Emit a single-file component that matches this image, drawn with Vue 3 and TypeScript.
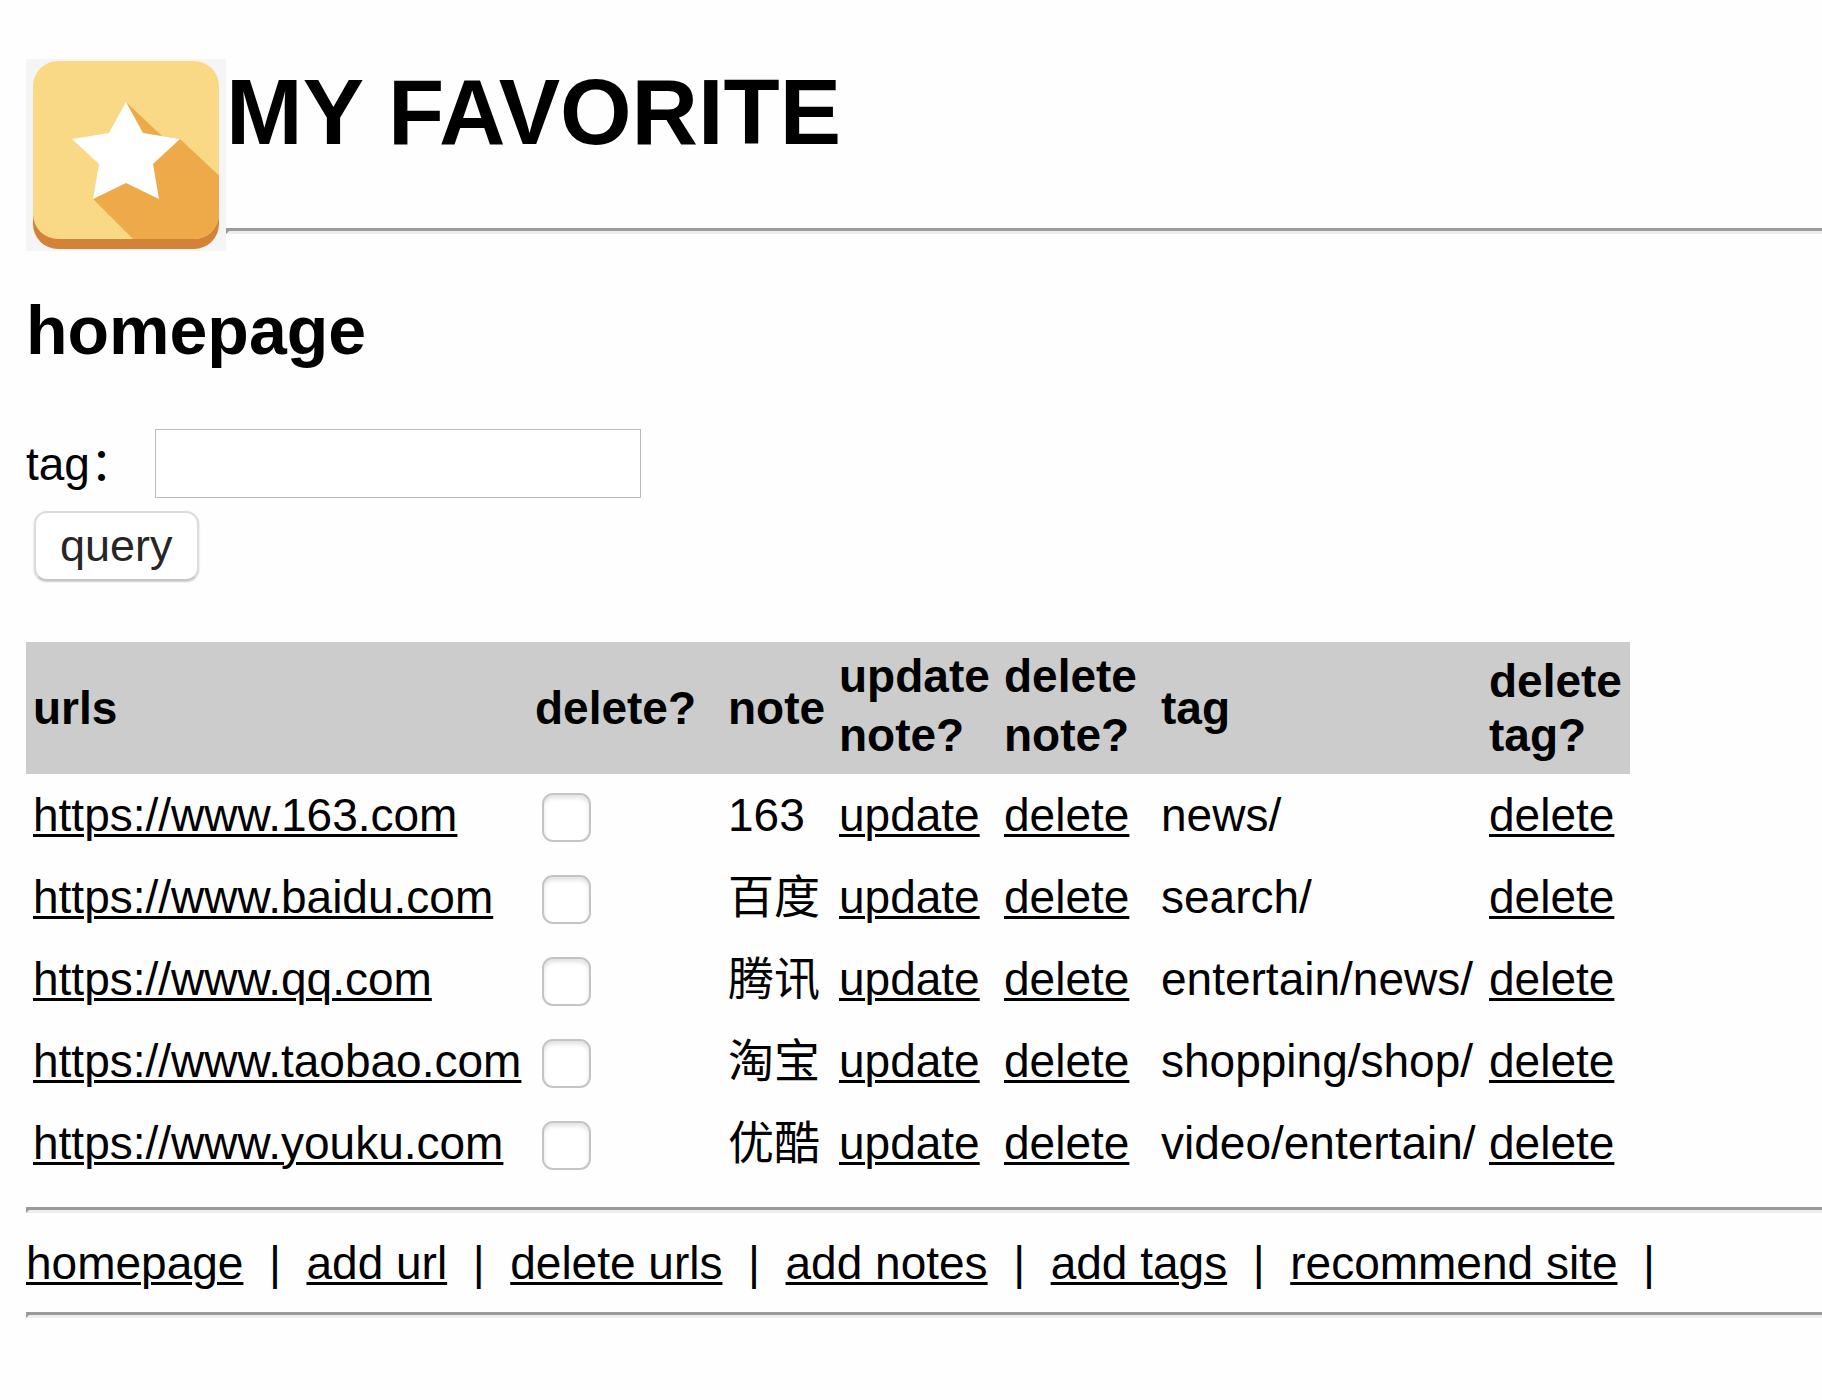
<script setup lang="ts">
import { ref } from 'vue'

interface Favorite {
  url: string
  note: string
  tags: string
}

const favorites: Favorite[] = [
  { url: 'https://www.163.com', note: '163', tags: 'news/' },
  { url: 'https://www.baidu.com', note: '百度', tags: 'search/' },
  { url: 'https://www.qq.com', note: '腾讯', tags: 'entertain/news/' },
  { url: 'https://www.taobao.com', note: '淘宝', tags: 'shopping/shop/' },
  { url: 'https://www.youku.com', note: '优酷', tags: 'video/entertain/' },
]

const links: string[] = ['homepage', 'add url', 'delete urls', 'add notes', 'add tags', 'recommend site']

const tag = ref('')
const marked = ref<string[]>([])
</script>

<template>
  <div class="page">
    <header class="masthead">
      <svg class="logo" viewBox="0 0 200 192" aria-hidden="true">
        <defs>
          <clipPath id="tile"><rect x="7" y="2" width="186" height="178" rx="25" /></clipPath>
        </defs>
        <rect width="200" height="192" fill="#f5f5f6" />
        <rect x="7" y="12" width="186" height="178" rx="25" fill="#d48237" />
        <g clip-path="url(#tile)">
          <rect x="7" y="2" width="186" height="178" fill="#f9d986" />
          <path d="M100 43 136 77 154 80 200 123V192H119L67 140 100 100Z" fill="#eeaa48" />
        </g>
        <path d="M100 43 117 74 154 80 127 105 133 140 100 124 67 140 73 105 46 80 83 74Z" fill="#fff" />
      </svg>
      <div class="masthead-body">
        <h1>MY FAVORITE</h1>
        <hr />
      </div>
    </header>

    <main>
      <h2>homepage</h2>
      <form class="search" @submit.prevent>
        <div class="field">
          <label for="tag">tag：</label>
          <input id="tag" v-model="tag" type="text" />
        </div>
        <button type="submit">query</button>
      </form>

      <table>
        <colgroup>
          <col class="c-url" />
          <col class="c-mark" />
          <col class="c-note" />
          <col class="c-update" />
          <col class="c-delete" />
          <col class="c-tag" />
          <col class="c-last" />
        </colgroup>
        <thead>
          <tr>
            <th>urls</th>
            <th>delete?</th>
            <th>note</th>
            <th class="loose">update note?</th>
            <th class="loose">delete note?</th>
            <th>tag</th>
            <th>delete tag?</th>
          </tr>
        </thead>
        <tbody>
          <tr v-for="item in favorites" :key="item.url">
            <td><a :href="item.url">{{ item.url }}</a></td>
            <td><input v-model="marked" type="checkbox" :value="item.url" :aria-label="item.url" /></td>
            <td>{{ item.note }}</td>
            <td><a href="#">update</a></td>
            <td><a href="#">delete</a></td>
            <td>{{ item.tags }}</td>
            <td><a href="#">delete</a></td>
          </tr>
        </tbody>
      </table>
    </main>

    <hr />
    <nav>
      <template v-for="link in links" :key="link">
        <a href="#">{{ link }}</a><span>&nbsp;&nbsp;|&nbsp; </span>
      </template>
    </nav>
    <hr />
  </div>
</template>

<style>
body {
  background: #fefefe;
}
</style>

<style scoped>
.page {
  padding: 59px 0 80px 26px;
  color: #000;
  font: 46px/54px "Liberation Sans", Arial, "Noto Sans CJK SC", sans-serif;
}

hr {
  margin: 0;
  border: solid #9a9a9a;
  border-width: 3px 0 3px 3px;
  border-bottom-color: #eee;
}

a {
  color: inherit;
  text-decoration: underline;
  text-decoration-thickness: 3px;
  text-underline-offset: 3px;
}

.masthead {
  display: flex;
}

.logo {
  flex: none;
  width: 200px;
  height: 192px;
}

.masthead-body {
  flex: 1;
}

h1 {
  margin: 0 0 62px;
  font-size: 92px;
  line-height: 107px;
}

h2 {
  margin: 40px 0 60px;
  font-size: 68px;
  line-height: 78px;
}

.search {
  display: flex;
  flex-direction: column;
  align-items: flex-start;
  gap: 13px;
  margin-bottom: 61px;
}

.field {
  display: flex;
  align-items: center;
}

.field label {
  width: 129px;
  white-space: nowrap;
}

.field input {
  box-sizing: border-box;
  width: 486px;
  height: 69px;
  padding: 0 8px;
  border: 1px solid #bbb;
  background: #fff;
  font: inherit;
}

button {
  height: 70px;
  margin-left: 8px;
  padding: 0 24px;
  border: 2px solid #dcdcdc;
  border-bottom-color: #c6c6c6;
  border-radius: 13px;
  background: #fff;
  box-shadow: 0 1px 2px rgba(0, 0, 0, 0.2);
  color: #262626;
  font: 45px/54px "Liberation Sans", Arial, sans-serif;
}

table {
  table-layout: fixed;
  width: 1604px;
  border-collapse: collapse;
}

.c-url { width: 502px; }
.c-mark { width: 193px; }
.c-note { width: 111px; }
.c-update { width: 165px; }
.c-delete { width: 157px; }
.c-tag { width: 328px; }
.c-last { width: 148px; }

thead tr {
  height: 132px;
  background: #ccc;
}

tbody tr {
  height: 82px;
}

th,
td {
  padding: 0 0 0 7px;
  text-align: left;
  vertical-align: middle;
}

td {
  white-space: nowrap;
}

th.loose {
  padding-bottom: 4px;
  line-height: 59px;
}

td input {
  display: block;
  appearance: none;
  box-sizing: border-box;
  width: 49px;
  height: 49px;
  margin: 4px 0 0 7px;
  border: 2px solid #c4c4c4;
  border-radius: 11px;
  background: #fff;
  box-shadow: inset 0 3px 4px rgba(0, 0, 0, 0.12);
}

td input:checked {
  background: #888;
}

main {
  margin-bottom: 23px;
}

nav {
  padding: 23px 0 22px;
}

nav span {
  white-space: pre-wrap;
}
</style>
